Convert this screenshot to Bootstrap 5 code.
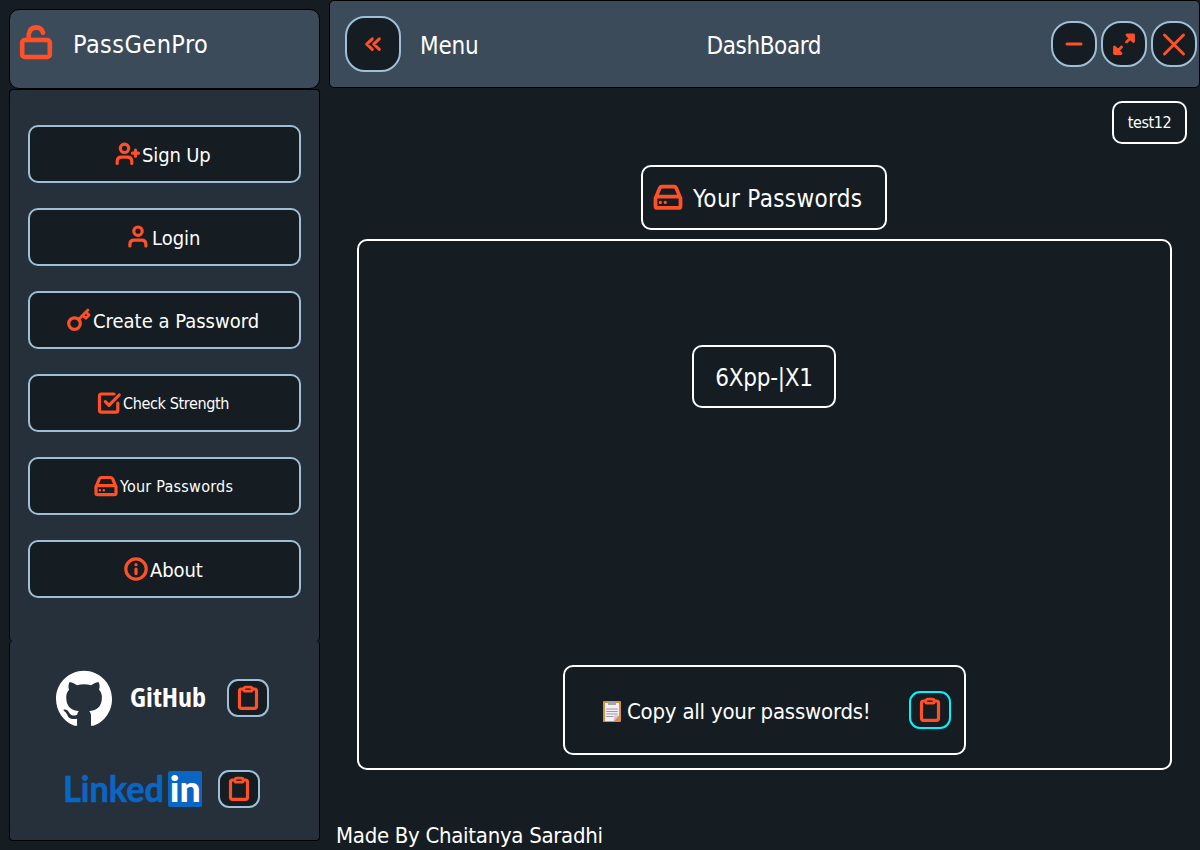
<!DOCTYPE html>
<html lang="en">
<head>
<meta charset="utf-8">
<title>PassGenPro</title>
<link href="https://cdn.jsdelivr.net/npm/bootstrap@5.3.0/dist/css/bootstrap.min.css" rel="stylesheet">
<style>
:root{--ink:#151d23;--panel:#26303b;--bar:#3b4b5a;--line:#9fbfd6;--hot:#ff5028}
body{background:var(--ink);color:#fff;width:1200px;height:850px;overflow:hidden;font-family:"DejaVu Sans Condensed","DejaVu Sans",sans-serif;font-stretch:condensed;line-height:1;white-space:nowrap}
svg{display:block;flex:none;overflow:visible}
.ico{fill:none;stroke:var(--hot);stroke-width:3;stroke-linecap:round;stroke-linejoin:round}
.side{width:311px;margin:9px 10px 0 9px}
.brand{height:80px;background:var(--bar);border:1px solid #000;border-radius:10px}
.brand svg{margin:14px 0 0 9px}
.brand span{margin:22px 0 0 18px;font-size:25px;letter-spacing:.45px}
.menu{height:552px;background:var(--panel);border:1px solid #000;border-bottom:0;border-radius:4px;padding:35px 18px 0;gap:25px}
.links{height:200px;background:var(--panel);border:1px solid #000;border-top:0;border-radius:4px}
.item{width:273px;height:58px;background:var(--ink);border:2px solid var(--line);border-radius:10px;color:#fff;padding:0;line-height:1;text-align:left}
.item span{margin-left:2px;padding-top:2px}
.item .ico{stroke-width:3.2}
.t16{font-size:16px}.t20{font-size:20px}.t22{font-size:22px}.t24{font-size:24px}
.clip{width:42px;height:38px;padding:0;background:var(--ink);border:2px solid var(--line);border-radius:11px}
.clip.hover{border-color:#00f5ff}
.gh{margin:29px 0 0 46px}.li{margin:44px 0 0 55px}
.top{height:88px;width:871px;background:var(--bar);border:1px solid #000;border-radius:5px;padding:0 2px 0 15px}
.menu-label{margin:3px 0 0 19px;letter-spacing:-.2px}
.dash-label{margin:3px 0 0 228px;letter-spacing:-.4px}
.round{width:46px;height:46px;padding:0;background:var(--ink);border:2px solid var(--line);border-radius:20px}
.back{width:56px;height:56px}
.frame{border:2px solid #fff;border-radius:10px}
.user{width:75px;height:43px;margin:13px 13px 0 0;padding-top:1px;letter-spacing:-.45px}
.title-box{width:246px;height:65px;margin:21px 0 0 312px;padding-left:10px}
.title-box span{margin:2px 0 0 10px;letter-spacing:.35px}
.vault{width:815px;height:531px;margin:9px 0 0 28px}
.pw{width:144px;height:63px;margin:104px 1px 0 0;padding-top:2px;letter-spacing:-.25px}
.copy{width:403px;height:90px;margin-bottom:13px;padding-left:37px}
.copy-label{margin:4px 0 0 4px;width:282px;letter-spacing:-.22px}
.foot{margin:55px 0 0 7px;letter-spacing:-.29px}
</style>
</head>
<body class="d-flex align-items-start">
<svg width="0" height="0" class="position-absolute"><defs>
<g id="clipboard"><path stroke-width="3.2" d="M13 8H11.5Q9.5 8 9.5 10V25.2Q9.5 27.3 11.5 27.3H24.5Q26.5 27.3 26.5 25.2V10Q26.5 8 24.5 8H23"/><rect x="13.8" y="6.2" width="8.4" height="4" rx="1.8" stroke-width="2.8"/></g>
<g id="drive"><path d="M2 13 5.2 5.2Q5.8 3.5 7.3 3.5H16.7Q18.2 3.5 18.8 5.2L22 13M3.5 11.6H20.5Q22 11.6 22 13.2V19.2Q22 20.6 20.5 20.6H3.5Q2 20.6 2 19.2V13.2Q2 11.6 3.5 11.6Z"/><path stroke-width="2.6" d="M5.9 16.2h.01M9.8 16.2h.01"/></g>
</defs></svg>

<aside class="side d-flex flex-column">
  <div class="brand d-flex align-items-start">
    <svg class="ico" style="stroke-width:4.6" width="36" height="36"><rect x="3.2" y="16" width="27.6" height="17" rx="2.6"/><path d="M9.8 15.5V10.5Q10.5 3.8 17 3.4Q22.8 3.6 24 8.8"/></svg>
    <span>PassGenPro</span>
  </div>
  <nav class="menu d-flex flex-column">
    <button class="item d-flex align-items-center" style="padding-left:85px"><svg class="ico" width="24" height="24"><circle cx="9.5" cy="6.3" r="4.2"/><path d="M2.2 21.5V19.5Q2.2 15.2 6.5 15.2H12.5Q16.8 15.2 16.8 19.5V21.5M20.5 8.2v6M17.5 11.2h6"/></svg><span class="t20" style="letter-spacing:-.15px;padding-left:1px">Sign Up</span></button>
    <button class="item d-flex align-items-center" style="padding-left:96px"><svg class="ico" width="24" height="24"><circle cx="12" cy="6.2" r="4.2"/><path d="M3.9 21V19.4Q3.9 15.2 8.1 15.2H15.7Q19.9 15.2 19.9 19.4V21"/></svg><span class="t20">Login</span></button>
    <button class="item d-flex align-items-center" style="padding-left:37px"><svg class="ico" width="24" height="24"><circle cx="7.5" cy="15.6" r="5.8"/><path stroke-width="2.8" d="M11.8 11.2 20.9 2.1M15.8 7.4 18.8 10.2 22 7 19.2 4.2"/></svg><span class="t20">Create a Password</span></button>
    <button class="item d-flex align-items-center" style="padding-left:67px"><svg class="ico" width="24" height="24"><path d="M17 3H4.5Q2.5 3 2.5 5V19.2Q2.5 21.2 4.5 21.2H18.8Q20.8 21.2 20.8 19.2V12M8.3 10.6 12 14.4 22.2 4"/></svg><span class="t16" style="letter-spacing:-.36px">Check Strength</span></button>
    <button class="item d-flex align-items-center" style="padding-left:64px"><svg class="ico" width="24" height="24"><use href="#drive"/></svg><span class="t16" style="letter-spacing:.25px">Your Passwords</span></button>
    <button class="item d-flex align-items-center" style="padding-left:94px"><svg class="ico" width="24" height="24"><circle cx="12" cy="12" r="10.2"/><path d="M12 12v4.6M12 7.6v.1"/></svg><span class="t20" style="letter-spacing:-.1px">About</span></button>
  </nav>
  <div class="links">
    <div class="gh d-flex align-items-center">
      <svg width="56" height="56" viewBox="0 -.2 16 16"><path fill="#fff" d="M8 0C3.58 0 0 3.58 0 8c0 3.54 2.2 6.6 5.3 7.72h.72v-.51c0-.19-.01-.82-.01-1.49-2.01.37-2.53-.49-2.69-.94-.09-.23-.48-.94-.82-1.13-.28-.15-.68-.52-.01-.53.63-.01 1.08.58 1.23.82.72 1.21 1.87.87 2.33.66.07-.52.28-.87.51-1.07-1.78-.2-3.64-.89-3.64-3.95 0-.87.31-1.59.82-2.15-.08-.2-.36-1.02.08-2.12 0 0 .67-.21 2.2.82.64-.18 1.32-.27 2-.27.68 0 1.36.09 2 .27 1.53-1.04 2.2-.82 2.2-.82.44 1.1.16 1.92.08 2.12.51.56.82 1.27.82 2.15 0 3.07-1.87 3.75-3.65 3.95.29.25.54.73.54 1.48 0 1.07-.01 1.93-.01 2.71h.7A8.01 8.01 0 0 0 16 8c0-4.42-3.58-8-8-8z"/></svg>
      <svg width="115" height="38"><text x="18" y="28.3" fill="#fff" font-family="Open Sans" font-weight="700" font-size="26.5" textLength="76" lengthAdjust="spacingAndGlyphs">GitHub</text></svg>
      <button class="clip"><svg class="ico" width="38" height="34" viewBox="-1 0 38 34"><use href="#clipboard"/></svg></button>
    </div>
    <div class="li d-flex align-items-center">
      <svg width="153" height="38"><g fill="#0a66c2"><rect x="103" y="1" width="34" height="36" rx="2"/><text x="-2" y="32" font-family="Lato" font-weight="700" font-size="35.5" textLength="101" lengthAdjust="spacingAndGlyphs" stroke="#0a66c2" stroke-width=".6">Linked</text></g><text x="104.8" y="32" fill="#fff" font-family="Lato" font-weight="900" font-size="35.5" textLength="31" lengthAdjust="spacingAndGlyphs">in</text></svg>
      <button class="clip"><svg class="ico" width="38" height="34" viewBox="-1 0 38 34"><use href="#clipboard"/></svg></button>
    </div>
  </div>
</aside>

<main class="d-flex flex-column" style="margin-left:-1px">
  <header class="top d-flex align-items-center">
    <button class="round back"><svg class="ico" width="52" height="52"><path d="M25.3 20.8 19.7 26.1 25.3 31.4M32.3 20.8 26.7 26.1 32.3 31.4"/></svg></button>
    <span class="t24 menu-label">Menu</span>
    <span class="t24 dash-label">DashBoard</span>
    <div class="d-flex gap-1 ms-auto">
      <button class="round"><svg class="ico" width="42" height="42"><path d="M14 21H28"/></svg></button>
      <button class="round"><svg class="ico" width="42" height="42"><path fill="#ff5028" stroke-width="2.8" d="M23.5 19 28 14.5M24 12H30.5V18.5ZM18.5 24 14 28.5M11.5 24V30.5H18Z"/></svg></button>
      <button class="round"><svg class="ico" width="42" height="42"><path d="M11.5 12 30.5 31M30.5 12 11.5 31"/></svg></button>
    </div>
  </header>
  <div class="frame user d-flex align-items-center justify-content-center align-self-end t16">test12</div>
  <div class="frame title-box d-flex align-items-center"><svg class="ico" width="30" height="30" viewBox="0 .7 24 24"><use href="#drive"/></svg><span class="t24">Your Passwords</span></div>
  <section class="frame vault d-flex flex-column align-items-center justify-content-between">
    <div class="frame pw d-flex align-items-center justify-content-center t24">6Xpp-|X1</div>
    <div class="frame copy d-flex align-items-center">
      <svg width="21" height="24" class="mt-1"><rect x="1" y="1" width="18" height="21" rx="1" fill="#d78f43"/><path d="M3 3H17V15.5L11.8 21H3Z" fill="#f3eef8"/><path d="M17 15.5H11.8V21Z" fill="#cfc3e5"/><path d="M4.2 9h11.6M4.2 11.5h11.6M4.2 14h11.6M4.2 16.5h7" stroke="#9b9aa8"/><path d="M6 2h2.5q1.5-2 3 0H14v3H6Z" fill="#a3a6a5"/></svg>
      <span class="t22 copy-label">Copy all your passwords!</span>
      <button class="clip hover"><svg class="ico" width="38" height="34" viewBox="-1 0 38 34"><use href="#clipboard"/></svg></button>
    </div>
  </section>
  <footer class="foot t22">Made By Chaitanya Saradhi</footer>
</main>
<script src="https://cdn.jsdelivr.net/npm/bootstrap@5.3.0/dist/js/bootstrap.bundle.min.js"></script>
</body>
</html>
